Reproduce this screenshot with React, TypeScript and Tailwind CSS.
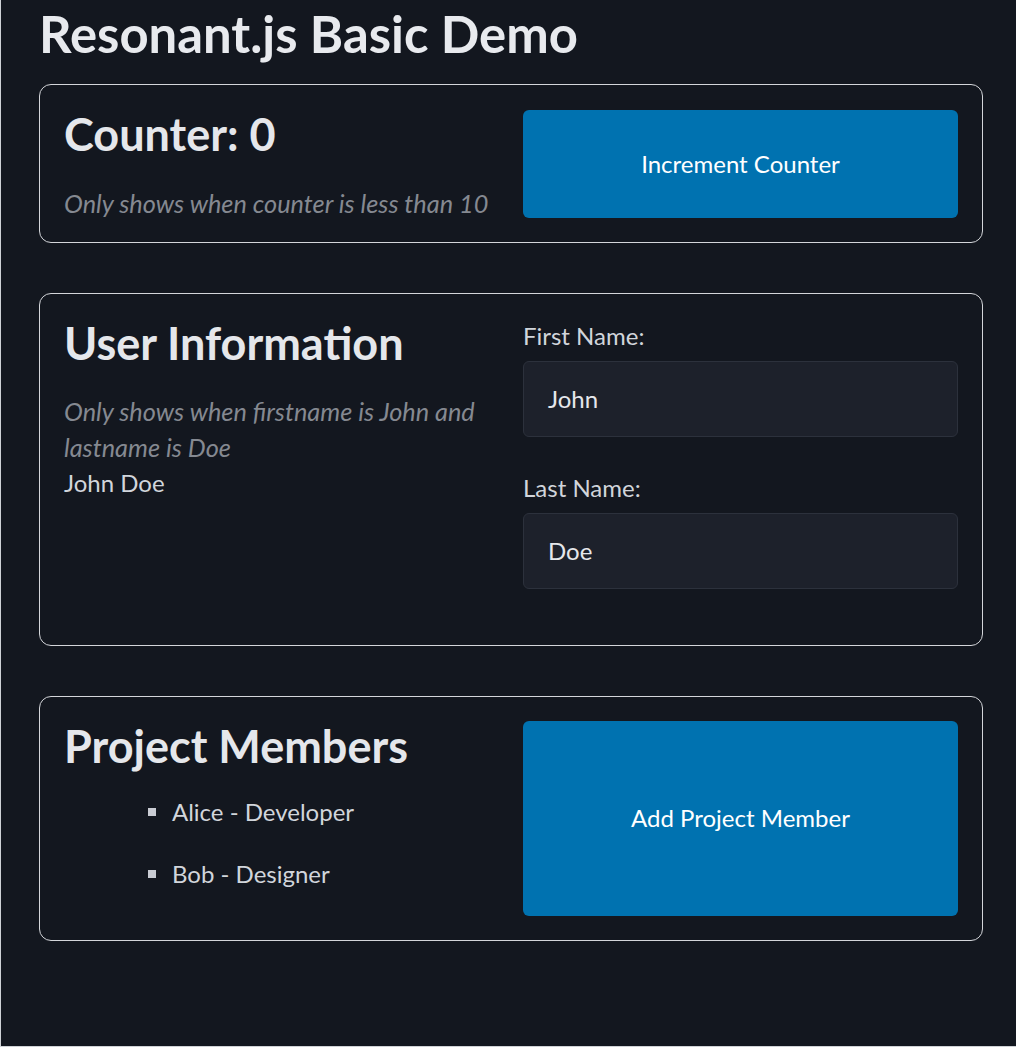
import React from "react";

function Card({ children, className = "" }: { children: React.ReactNode; className?: string }) {
  return (
    <div className={`border border-[#d4d6da] rounded-[12px] px-[24px] pt-[24px] ${className}`}>
      {children}
    </div>
  );
}

export default function App() {
  return (
    <div className="min-h-[1047px] bg-[#13171f] border-l border-b border-[#cfd2d6] pl-[38px] font-['Lato',sans-serif] text-[#d1d5db]">
      <h1 className="pt-[5px] text-[50.8px] leading-[57.6px] font-bold text-[#e8eaee] mb-[21px]">
        Resonant.js Basic Demo
      </h1>

      <div className="w-[944px] flex flex-col gap-[50px]">
        <Card className="pb-[21px]">
          <div className="grid grid-cols-2 gap-[24px] items-start">
            <div>
              <h2 className="text-[45px] leading-[50px] font-bold text-[#e5e7eb] mb-[26px]">Counter: 0</h2>
              <p className="italic text-[25.3px] leading-[36px] text-[#858991]">
                Only shows when counter is less than 10
              </p>
            </div>
            <button className="mt-[1px] h-[108px] rounded-[6px] bg-[#0072b0] text-white text-[24px]">
              Increment Counter
            </button>
          </div>
        </Card>

        <Card className="pb-[23px]">
          <div className="grid grid-cols-2 gap-[24px] items-start">
            <div>
              <h2 className="text-[45px] leading-[50px] font-bold text-[#e5e7eb] mb-[25px]">User Information</h2>
              <p className="italic text-[25.3px] leading-[36px] text-[#858991]">
                Only shows when firstname is John and lastname is Doe
              </p>
              <p className="text-[24px] leading-[36px]">John Doe</p>
            </div>
            <div>
              <div className="mb-[33px]">
                <label className="block text-[24px] leading-[36px] mb-[7px]">First Name:</label>
                <div className="h-[76px] rounded-[6px] bg-[#1d212b] border border-[#2c313c] flex items-center pl-[24px] text-[24px] text-[#e5e7eb]">
                  John
                </div>
              </div>
              <div className="mb-[33px]">
                <label className="block text-[24px] leading-[36px] mb-[7px]">Last Name:</label>
                <div className="h-[76px] rounded-[6px] bg-[#1d212b] border border-[#2c313c] flex items-center pl-[24px] text-[24px] text-[#e5e7eb]">
                  Doe
                </div>
              </div>
            </div>
          </div>
        </Card>

        <Card className="pb-[24px]">
          <div className="grid grid-cols-2 gap-[24px]">
            <div>
              <h2 className="text-[45px] leading-[50px] font-bold text-[#e5e7eb] mb-[23px]">Project Members</h2>
              <ul className="flex flex-col gap-[26px] pl-[84px] mb-[24px]">
                {["Alice - Developer", "Bob - Designer"].map((m) => (
                  <li key={m} className="flex items-center text-[24px] leading-[36px]">
                    <span className="w-[8px] h-[8px] bg-[#c9ccd3] mr-[16px]" />
                    {m}
                  </li>
                ))}
              </ul>
            </div>
            <button className="rounded-[6px] bg-[#0072b0] text-white text-[24px]">Add Project Member</button>
          </div>
        </Card>
      </div>
    </div>
  );
}
